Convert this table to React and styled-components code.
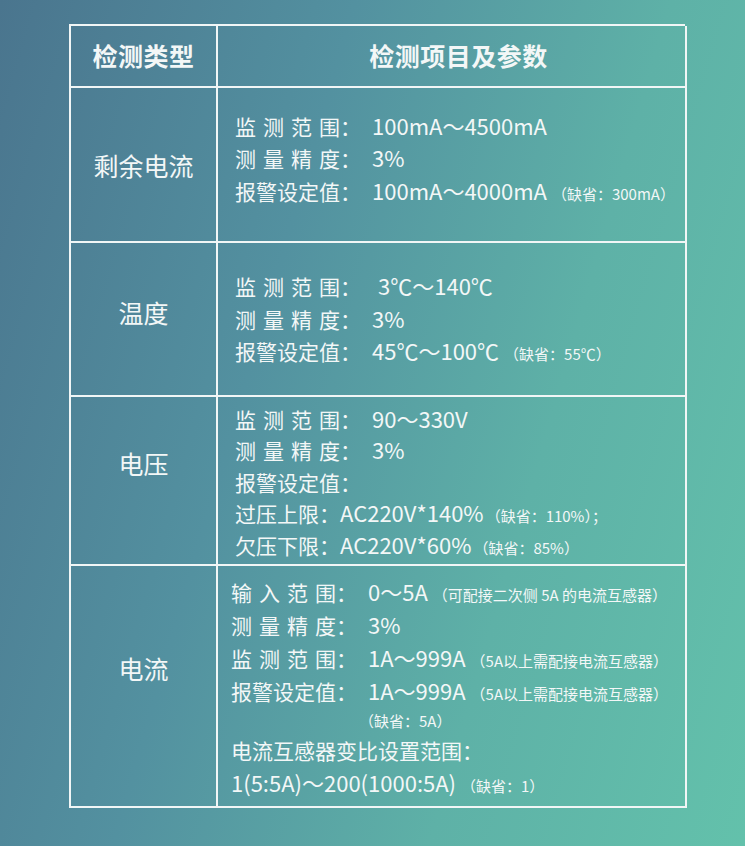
import React from 'react';
import styled, { createGlobalStyle } from 'styled-components';

const GlobalStyle = createGlobalStyle`
  html, body {
    margin: 0;
    padding: 0;
  }
  body {
    width: 745px;
    height: 846px;
    overflow: hidden;
    background: linear-gradient(106deg, #4a758e 0%, #5391a0 36%, #5eb1a7 68%, #63c1ab 100%);
    font-family: "Noto Sans CJK SC", "Noto Sans", sans-serif;
    color: #f3f7f7;
  }
`;

const Page = styled.div`
  width: 745px;
  height: 846px;
  padding: 24px 0 0 69px;
  box-sizing: border-box;
`;

const Table = styled.div`
  width: 616px;
  display: grid;
  grid-template-columns: 147px 469px;
  grid-template-rows: 62px 155px 154px 169px 242px;
  border-left: 2px solid #f1f6f6;
  border-top: 2px solid #f1f6f6;
  box-sizing: border-box;
`;

const Cell = styled.div`
  border-right: 2px solid #f1f6f6;
  border-bottom: 2px solid #f1f6f6;
  box-sizing: border-box;
  display: flex;
  flex-direction: column;
  justify-content: center;
`;

const HeadCell = styled(Cell)`
  align-items: center;
  font-size: 25px;
  font-weight: 700;
  letter-spacing: 0.5px;
  padding-left: ${p => p.$shift || 0}px;
  padding-bottom: 2px;
`;

const TypeCell = styled(Cell)`
  align-items: center;
  font-size: 25px;
  padding-bottom: ${p => p.$lift || 0}px;
`;

const Body = styled(Cell)`
  padding-left: ${p => p.$left || 17}px;
  padding-bottom: ${p => p.$lift || 0}px;
  padding-top: ${p => p.$drop || 0}px;
  font-size: 21px;
  line-height: ${p => p.$lh || 32}px;
`;

const Line = styled.div`
  white-space: nowrap;
`;

const Key = styled.span`
  display: inline-block;
  width: ${p => (p.$spread ? '105px' : 'auto')};
  text-align: ${p => (p.$spread ? 'justify' : 'left')};
  text-align-last: ${p => (p.$spread ? 'justify' : 'auto')};
`;

const Val = styled.span`
  font-size: 22px;
  line-height: 1;
  margin-left: ${p => p.$gap ?? 11}px;
`;

const Note = styled.span`
  font-size: 15px;
  line-height: 1;
  margin-left: ${p => p.$gap ?? 5}px;
`;

const NoteLine = styled.div`
  font-size: 15px;
  line-height: 26px;
  padding-left: ${p => p.$indent || 0}px;
`;

function Row({ k, spread, v, gap, note }) {
  return (
    <Line>
      <Key $spread={spread}>{k}</Key>：
      {v && <Val $gap={gap}>{v}</Val>}
      {note && <Note>{note}</Note>}
    </Line>
  );
}

export default function App() {
  return (
    <Page>
      <GlobalStyle />
      <Table>
        <HeadCell>检测类型</HeadCell>
        <HeadCell $shift={14}>检测项目及参数</HeadCell>

        <TypeCell>剩余电流</TypeCell>
        <Body $lh={32.5} $lift={12}>
          <Row k="监测范围" spread v="100mA～4500mA" />
          <Row k="测量精度" spread v="3%" />
          <Row k="报警设定值" v="100mA～4000mA" note="（缺省：300mA）" />
        </Body>

        <TypeCell $lift={14}>温度</TypeCell>
        <Body $lh={32.5}>
          <Row k="监测范围" spread v="3℃～140℃" gap={17} />
          <Row k="测量精度" spread v="3%" />
          <Row k="报警设定值" v="45℃～100℃" note="（缺省：55℃）" />
        </Body>

        <TypeCell $lift={36}>电压</TypeCell>
        <Body $lh={31.5} $drop={4}>
          <Row k="监测范围" spread v="90～330V" />
          <Row k="测量精度" spread v="3%" />
          <Row k="报警设定值" />
          <Line>
            过压上限：<Val $gap={0}>AC220V*140%</Val>
            <Note $gap={2}>（缺省：110%）；</Note>
          </Line>
          <Line>
            欠压下限：<Val $gap={0}>AC220V*60%</Val>
            <Note $gap={2}>（缺省：85%）</Note>
          </Line>
        </Body>

        <TypeCell $lift={36}>电流</TypeCell>
        <Body $lh={33} $left={13} $drop={3}>
          <Row k="输入范围" spread v="0～5A" note="（可配接二次侧 5A 的电流互感器）" />
          <Row k="测量精度" spread v="3%" />
          <Row k="监测范围" spread v="1A～999A" note="（5A以上需配接电流互感器）" />
          <Row k="报警设定值" v="1A～999A" note="（5A以上需配接电流互感器）" />
          <NoteLine $indent={128}>（缺省：5A）</NoteLine>
          <Line>电流互感器变比设置范围：</Line>
          <Line>
            <Val $gap={0}>1(5:5A)～200(1000:5A)</Val>
            <Note>（缺省：1）</Note>
          </Line>
        </Body>
      </Table>
    </Page>
  );
}
